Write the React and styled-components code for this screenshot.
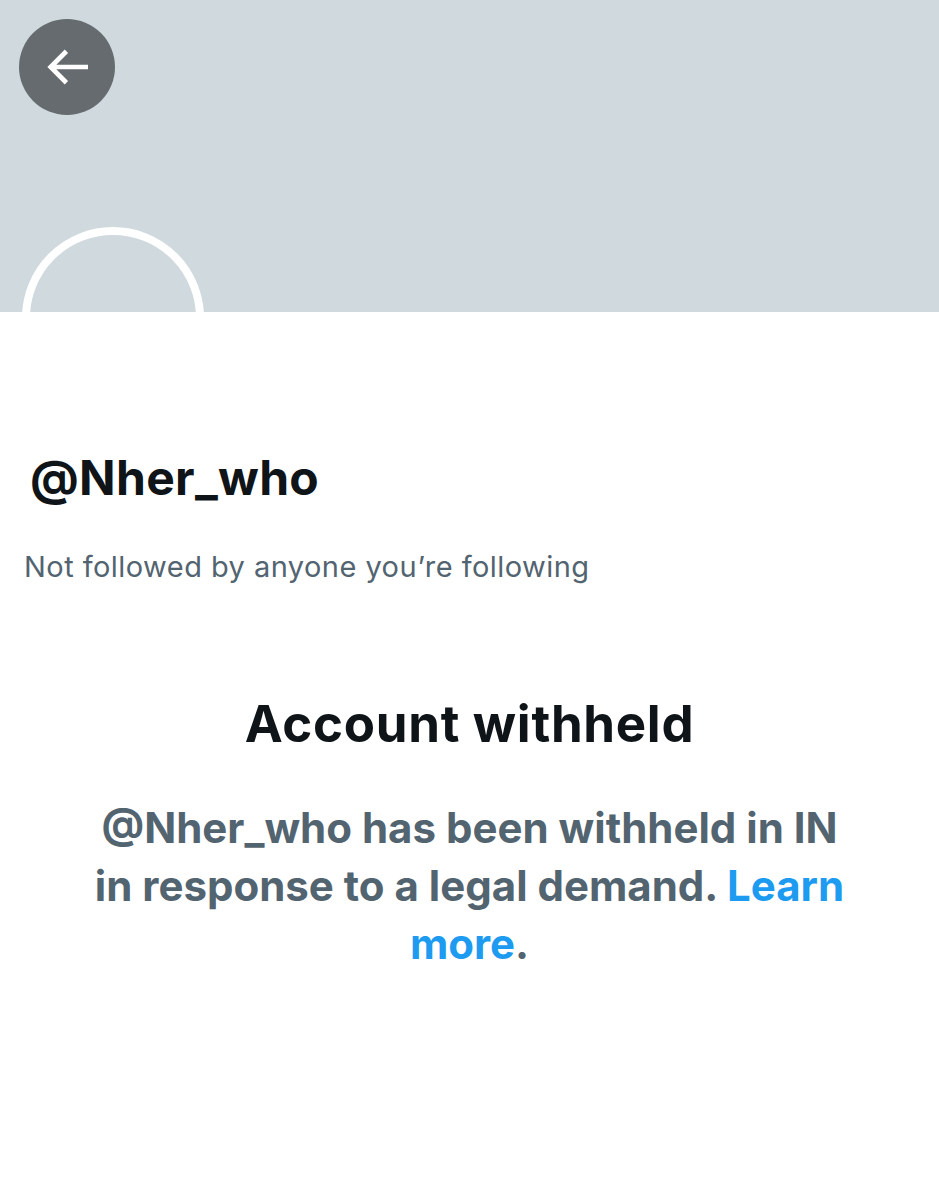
import React from 'react';
import styled, { createGlobalStyle } from 'styled-components';

const GlobalStyle = createGlobalStyle`
  html, body {
    margin: 0;
    padding: 0;
    background: #ffffff;
  }
  body {
    font-family: Inter, "Liberation Sans", Arial, sans-serif;
    -webkit-font-smoothing: antialiased;
  }
`;

const Page = styled.div`
  width: 939px;
  min-height: 1200px;
  background: #ffffff;
`;

const Banner = styled.div`
  position: relative;
  height: 312px;
  background: #cfd9de;
  overflow: hidden;
`;

const BackButton = styled.button`
  position: absolute;
  top: 19px;
  left: 19px;
  width: 96px;
  height: 96px;
  border: none;
  border-radius: 50%;
  background: #656b6f;
  display: flex;
  align-items: center;
  justify-content: center;
  padding: 0;
  cursor: pointer;
`;

const Avatar = styled.div`
  position: absolute;
  left: 22px;
  top: 227px;
  width: 182px;
  height: 182px;
  box-sizing: border-box;
  border-radius: 50%;
  border: 8px solid #ffffff;
  background: #cfd9de;
`;

const Profile = styled.div`
  padding: 138px 24px 0;
`;

const Handle = styled.h1`
  margin: 0 0 0 6px;
  font-size: 48px;
  line-height: 56px;
  font-weight: 700;
  letter-spacing: 0.3px;
  color: #0f1419;
`;

const FollowNote = styled.p`
  margin: 43px 0 0;
  font-size: 29px;
  line-height: 36px;
  font-weight: 400;
  letter-spacing: 0.45px;
  color: #536471;
`;

const Notice = styled.section`
  display: flex;
  flex-direction: column;
  align-items: center;
  text-align: center;
  padding: 109px 0 0;
`;

const NoticeTitle = styled.h2`
  margin: 0;
  font-size: 51px;
  line-height: 60px;
  font-weight: 700;
  letter-spacing: 0.7px;
  color: #0f1419;
`;

const NoticeText = styled.p`
  margin: 45px 0 0;
  max-width: 762px;
  font-size: 42px;
  line-height: 58px;
  font-weight: 700;
  color: #536471;
`;

const Link = styled.a`
  color: #1d9bf0;
  text-decoration: none;
`;

const ArrowLeft = () => (
  <svg width="56" height="56" viewBox="0 0 24 24" fill="#ffffff">
    <path d="M7.414 13l5.043 5.04-1.414 1.42L3.586 12l7.457-7.46 1.414 1.42L7.414 11H21v2H7.414z" />
  </svg>
);

export default function App() {
  return (
    <Page>
      <GlobalStyle />
      <Banner>
        <BackButton aria-label="Back">
          <ArrowLeft />
        </BackButton>
        <Avatar />
      </Banner>
      <Profile>
        <Handle>@Nher_who</Handle>
        <FollowNote>Not followed by anyone you’re following</FollowNote>
      </Profile>
      <Notice>
        <NoticeTitle>Account withheld</NoticeTitle>
        <NoticeText>
          @Nher_who has been withheld in IN in response to a legal demand.{' '}
          <Link href="#">Learn more</Link>.
        </NoticeText>
      </Notice>
    </Page>
  );
}
